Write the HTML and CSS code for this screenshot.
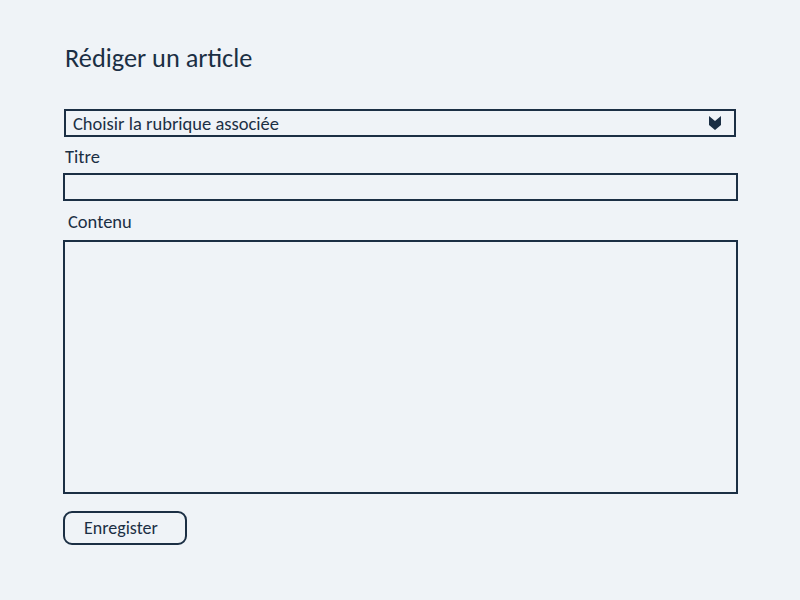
FILE: index.html
```html
<!DOCTYPE html>
<html lang="fr">
<head>
<meta charset="utf-8">
<link rel="stylesheet" href="styles.css">
</head>
<body>
<main class="page">
  <h1 class="title">Rédiger un article</h1>
  <form class="form">
    <div class="select">
      <span class="select-text">Choisir la rubrique associée</span>
      <svg class="chevron" width="12" height="14" viewBox="0 0 12 14"><path d="M0 0 L6 5 L12 0 L12 9 L6 14 L0 9 Z" fill="#1b2f44"/></svg>
    </div>
    <label class="label label-titre">Titre</label>
    <div class="input"></div>
    <label class="label label-contenu">Contenu</label>
    <div class="textarea"></div>
    <button type="button" class="button">Enregister</button>
  </form>
</main>
</body>
</html>
```

FILE: styles.css
```css
html, body {
  margin: 0;
  padding: 0;
  background: #eff3f7;
}
body {
  font-family: Carlito, Calibri, "Open Sans", sans-serif;
  color: #1b2f44;
}
.page {
  padding: 42px 0 0 63px;
  width: 675px;
}
.title {
  margin: 0 0 0 2px;
  font-size: 26.3px;
  font-weight: 400;
  line-height: 32px;
}
.form {
  display: flex;
  flex-direction: column;
  margin-top: 35px;
}
.select {
  box-sizing: border-box;
  width: 672px;
  height: 28px;
  margin-left: 1px;
  border: 2px solid #1b2f44;
  display: flex;
  align-items: center;
  justify-content: space-between;
  padding: 0 13px 0 7px;
  font-size: 18.5px;
}
.label {
  font-size: 18.5px;
  line-height: 20px;
}
.label-titre {
  margin: 10px 0 0 2px;
}
.input {
  box-sizing: border-box;
  height: 28px;
  margin-top: 6px;
  border: 2px solid #1b2f44;
}
.label-contenu {
  margin: 11px 0 0 5px;
}
.textarea {
  box-sizing: border-box;
  height: 254px;
  margin-top: 8px;
  border: 2px solid #1b2f44;
}
.button {
  align-self: flex-start;
  margin-top: 17px;
  width: 124px;
  height: 34px;
  border: 2px solid #1b2f44;
  border-radius: 9px;
  background: transparent;
  color: #1b2f44;
  font-family: inherit;
  font-size: 18px;
  text-align: left;
  padding: 0 0 0 19px;
}
```
